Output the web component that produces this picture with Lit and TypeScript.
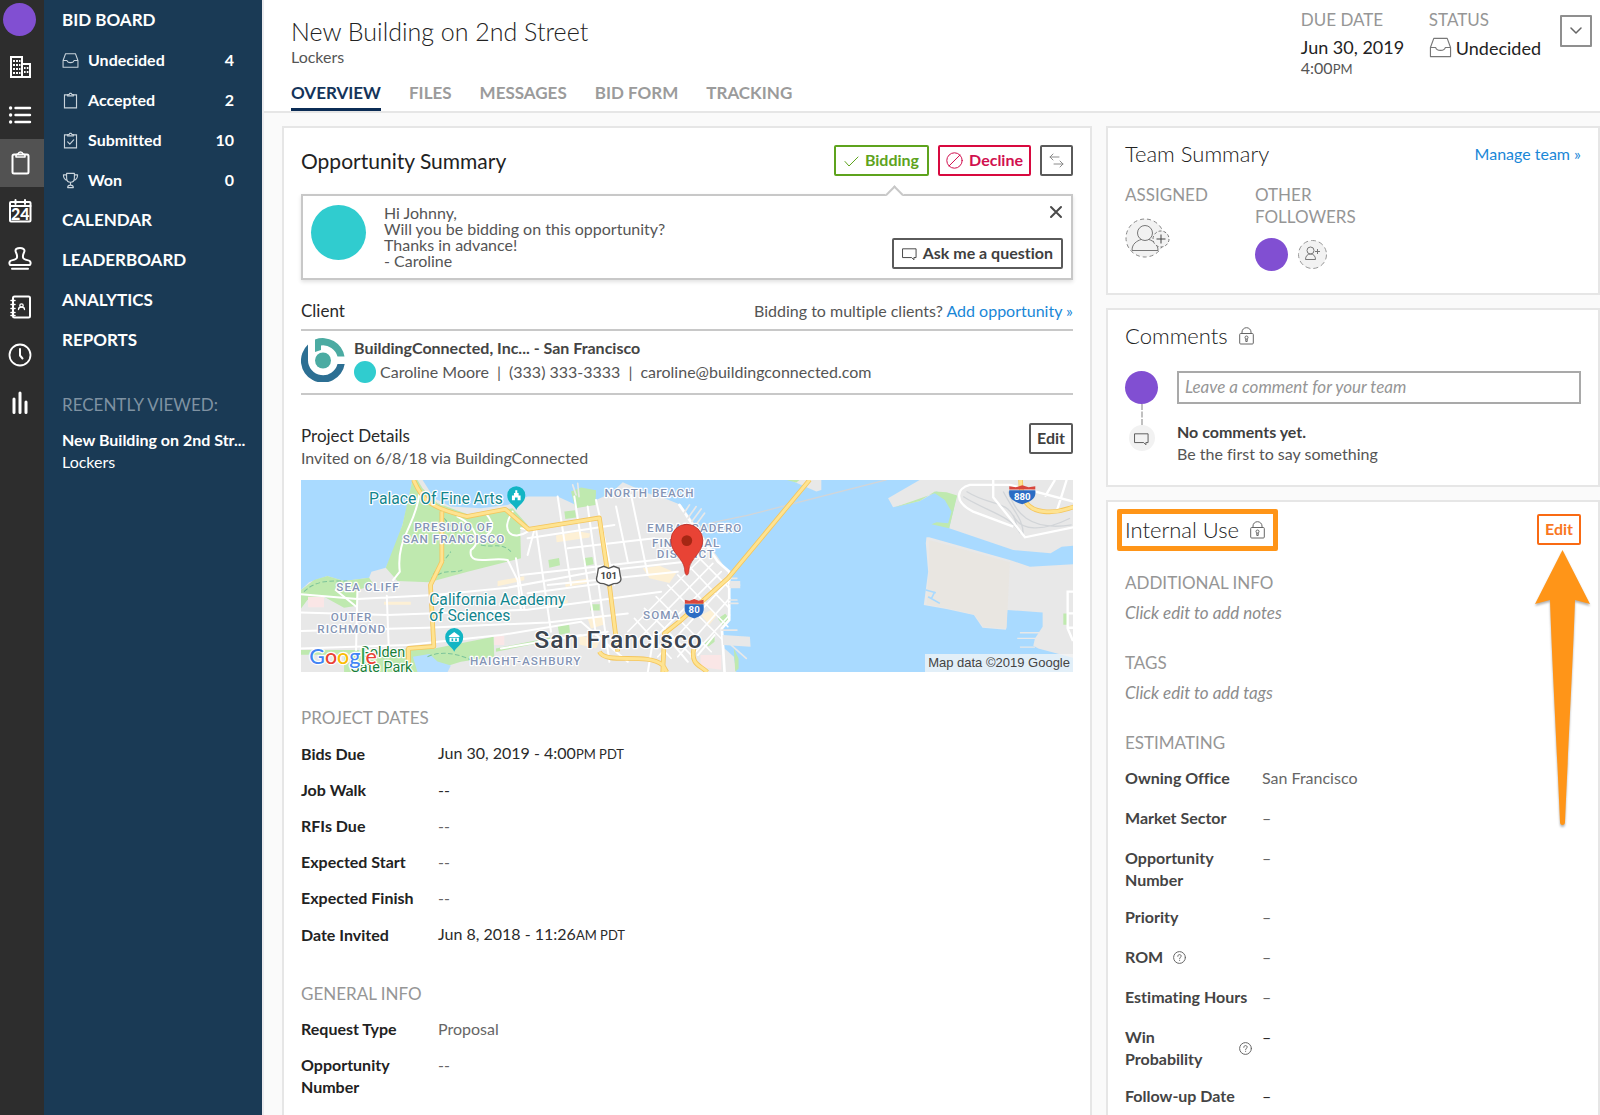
import { LitElement, html, css, svg, nothing } from "lit";
import { customElement } from "lit/decorators.js";

/* ---------- icons ---------- */

const icon = (size: number, body: unknown, box = 24) => html`
  <svg class="icon" width=${size} height=${size} viewBox="0 0 ${box} ${box}" fill="none"
    stroke="currentColor" stroke-linecap="round" stroke-linejoin="round" aria-hidden="true">${body}</svg>`;

const railIcons = {
  building: svg`<g stroke-width="2"><path d="M3 2h11v20H3zM14 9h8v13h-8" stroke-linejoin="miter"/></g>
    <g fill="currentColor" stroke="none"><path d="M5 5h2v2H5zM8 5h2v2H8zM11 5h1.500v2H11zM5 9h2v2H5zM8 9h2v2H8zM11 9h1.500v2H11zM5 13h2v2H5zM8 13h2v2H8zM11 13h1.500v2H11zM5 17h2v2H5zM8 17h2v2H8zM11 17h1.500v2H11zM16 12h1.600v2H16zM18.800 12h1.600v2h-1.600zM16 16h1.600v2H16zM18.800 16h1.600v2h-1.600z"/></g>`,
  list: svg`<g stroke-width="2.400"><path d="M7.500 5H22M7.500 12H22M7.500 19H22"/></g>
    <g fill="currentColor" stroke="none"><circle cx="2.600" cy="5" r="1.700"/><circle cx="2.600" cy="12" r="1.700"/><circle cx="2.600" cy="19" r="1.700"/></g>`,
  clipboard: svg`<g stroke-width="2"><rect x="4.500" y="3.500" width="16" height="19" rx="1.500"/>
    <path d="M8 6V4.500c0-1 1-1.300 2-1.500.500-1.500 1-2 2.500-2s2 .500 2.500 2c1 .200 2 .500 2 1.500V6z" stroke-width="1.600"/></g>`,
  calendar: svg`<rect x="2" y="3" width="20.500" height="19.500" rx="1" stroke-width="2"/><path d="M7.500 1v4M17 1v4" stroke-width="2"/>
    <path d="M2 7h20.500" stroke-width="2"/>
    <text x="12.300" y="21" text-anchor="middle" font-size="16" font-weight="900" fill="currentColor" stroke="none">24</text>`,
  stamp: svg`<g stroke-width="2"><path d="M12 1c-3 0-4.500 1.200-4.500 2.700 0 1.800 2.500 4.300 1.300 7.300C8.200 12.800 4 13 2.500 13.800 1 14.800 1.200 17 2 18h20c.800-1 1-3.200-.500-4.200-1.500-.800-5.700-1-6.300-2.800-1.200-3 1.300-5.500 1.300-7.300C16.500 2.200 15 1 12 1z"/><path d="M4 21.800h16"/></g>`,
  contacts: svg`<g stroke-width="2"><rect x="5" y="1.500" width="17" height="21" rx="1.500"/></g>
    <path d="M3 5.500h4M3 9.500h4M3 13.500h4M3 17.500h4M3 20.500h4" stroke-width="1.500"/>
    <circle cx="13.500" cy="10.500" r="1.700" stroke-width="1.300"/><path d="M10.500 14.500c0-2 1.500-2.500 3-2.500s3 .500 3 2.500" stroke-width="1.300"/>`,
  clock: svg`<circle cx="12" cy="12" r="10.500" stroke-width="1.800"/><path d="M12 6v6.500l2.500 3" stroke-width="2"/>`,
  bars: svg`<path d="M6 8v13.500M12 2v19.500M18 11v10.500" stroke-width="3"/>`,
};

const trayPath = svg`<path d="M1.500 12 5 2.500h14L22.500 12v9.500h-21zM1.500 12H7c.500 2.500 2.500 3 5 3s4.500-.500 5-3h5.500"/>`;
const bidIcons = {
  tray: svg`<g stroke-width="1.500">${trayPath}</g>`,
  clip: svg`<g stroke-width="1.600"><path d="M8 4H3.500v18.500h17V4H16" stroke-linejoin="miter"/><path d="M8 5.500V3.500h2L11 2h2l1 1.500h2v2z"/></g>`,
  clipCheck: svg`<g stroke-width="1.600"><path d="M8 4H3.500v18.500h17V4H16" stroke-linejoin="miter"/><path d="M8 5.500V3.500h2L11 2h2l1 1.500h2v2z"/><path d="m8 14 3 3 5.500-6"/></g>`,
  cup: svg`<g stroke-width="1.600"><path d="M6.500 2h11v6c0 4-2 6.500-5.500 6.500S6.500 12 6.500 8zM6.500 4H2c0 4 1.500 7 5.500 8M17.500 4H22c0 4-1.500 7-5.500 8M12 14.500v4M8 22c0-2.500 1.500-3.500 4-3.500s4 1 4 3.500z"/></g>`,
};

const lockIcon = html`<svg class="icon" width="15" height="18" viewBox="0 0 15 18" fill="none" stroke="currentColor" aria-hidden="true">
  <rect x="0.700" y="6.500" width="13.600" height="10.500" rx="1"/><path d="M3 6.500V5a4.500 4.300 0 0 1 9 0v1.500"/>
  <circle cx="7.500" cy="10.500" r="1.500"/><path d="M6.800 12v2.500h1.400V12"/></svg>`;
const bubble = svg`<path d="M1.500 4.500h21v14H19v3.500l-3.500-3.500h-14z" stroke-width="1.500" stroke-linejoin="miter"/>`;
const helpIcon = html`<svg class="icon" width="13" height="13" viewBox="0 0 13 13" fill="none" stroke="currentColor" stroke-linecap="round" aria-hidden="true">
  <circle cx="6.500" cy="6.500" r="5.900"/><path d="M4.800 5.300c0-1.100.700-1.700 1.700-1.700s1.700.600 1.700 1.500c0 1.200-1.600 1.200-1.600 2.400M6.600 9.200v.200"/></svg>`;

/* ---------- data ---------- */

type Row = { label: string; value: string; zone?: string; help?: boolean; strong?: boolean };

const board = [
  { label: "Undecided", count: 4, glyph: bidIcons.tray },
  { label: "Accepted", count: 2, glyph: bidIcons.clip },
  { label: "Submitted", count: 10, glyph: bidIcons.clipCheck },
  { label: "Won", count: 0, glyph: bidIcons.cup },
];
const rail = [
  { name: "Companies", glyph: railIcons.building },
  { name: "Lists", glyph: railIcons.list },
  { name: "Bid board", glyph: railIcons.clipboard, on: true },
  { name: "Calendar", glyph: railIcons.calendar },
  { name: "Approvals", glyph: railIcons.stamp },
  { name: "Contacts", glyph: railIcons.contacts },
  { name: "History", glyph: railIcons.clock },
  { name: "Statistics", glyph: railIcons.bars },
];
const dates: Row[] = [
  { label: "Bids Due", value: "Jun 30, 2019 - 4:00", zone: "PM PDT" },
  { label: "Job Walk", value: "--", strong: true },
  { label: "RFIs Due", value: "--" },
  { label: "Expected Start", value: "--" },
  { label: "Expected Finish", value: "--" },
  { label: "Date Invited", value: "Jun 8, 2018 - 11:26", zone: "AM PDT" },
];
const general: Row[] = [
  { label: "Request Type", value: "Proposal" },
  { label: "Opportunity Number", value: "--" },
];
const estimating: Row[] = [
  { label: "Owning Office", value: "San Francisco" },
  { label: "Market Sector", value: "–" },
  { label: "Opportunity Number", value: "–" },
  { label: "Priority", value: "–" },
  { label: "ROM", value: "–", help: true },
  { label: "Estimating Hours", value: "–" },
  { label: "Win Probability", value: "–", help: true, strong: true },
  { label: "Follow-up Date", value: "–", strong: true },
];

/* ---------- map ---------- */

@customElement("city-map")
class CityMap extends LitElement {
  static styles = css`
    :host { display: block; position: relative; height: 192px; overflow: hidden; background: #a9daff; }
    .canvas { display: block; width: 100%; height: 100%; }
    .credit {
      position: absolute; right: 0; bottom: 0; padding: 0 3px; background: rgba(245, 245, 245, 0.75);
      font: 13px/18px "Liberation Sans", sans-serif; color: #444;
    }
    .area { font: 500 35px Roboto, sans-serif; letter-spacing: 3px; fill: #8494b5; }
    .place { font: 400 47px Roboto, sans-serif; fill: #12858d; }
    .park { font: 400 43px Roboto, sans-serif; fill: #188038; }
    .city { font: 500 74px Roboto, sans-serif; letter-spacing: 3px; fill: #3c4550; }
    .halo { stroke: #fff; stroke-width: 7; paint-order: stroke; stroke-linejoin: round; }
    .shield { font: 700 29px Roboto, sans-serif; text-anchor: middle; }
    .brand { font: 500 64px Lato, sans-serif; }
  `;

  render() {
    return html`
      <svg class="canvas" viewBox="21 15 2313 576" preserveAspectRatio="xMidYMid slice" role="img" aria-label="Map of San Francisco">
        <path fill="#e8e8e8" d="M355 15 345 70 325 150 300 225 275 278 232 290 225 308 150 318 100 303 45 322 21 345V591H1325L1318 545 1290 520 1282 455 1305 430V330L1300 290 1255 225 1210 160 1160 90 1110 70 1060 55 985 22 950 55 905 75 845 90 790 65 700 65 640 90 560 100 470 95 420 70 385 15z"/>
        <g fill="#bfe9af">
          <path d="M355 15 325 150 275 278 310 318 405 322 520 290 680 250 678 165 700 150 655 100 600 108 520 118 430 85 385 40 370 15z"/>
          <path d="M21 345 60 315 100 303 150 318 225 308 240 330 190 345 188 392 150 398 90 365 40 375 21 400z"/>
          <path d="M342 520 420 520 598 485 600 545 500 560 400 591H150V530z"/>
          <path d="M21 525h180v14H21zM830 50l30-12 45 8-2 44-60 10z"/>
          <path d="M810 110l32-4 3 22-32 4zM762 255l32-6 3 22-32 7zM866 250l28-4 4 22-28 5zM790 452l34-6 3 26-32 8zM605 520l190-38v10L605 530zM888 388h28v18h-28z"/>
          <path d="M1270 430l22-14 12 14-20 20zM1230 505l30-25v20l-18 14zM1318 520l14 30v30l-10 10z"/>
        </g>
        <g fill="#fdf0d5">
          <path d="M785 182l70-12 32 6-2 12-98 14zM610 318l80-14v12l-80 18zM812 322l70-12v14l-68 12zM270 380h80v9h-80zM1045 280l50-8 50 22-20 30-60-14zM880 430l50-12v30l-40 12zM1220 420l30-15 18 15-24 30zM855 480l60 20-10 20-50-12zM760 385l60-10v10l-60 10z"/>
        </g>
        <path fill="#fae6e6" d="M42 365h48v32H42zM600 482h30v28h-30zM1218 540h62v44l-62-8z"/>
        <path fill="#b4deff" d="M356 545l50-8 24 22 40 12-10 20h-90z"/>
        <g fill="none" stroke="#7cc49a" stroke-width="3" stroke-dasharray="14 7">
          <path d="M410 320c10-40 40-60 60-90M430 300c30-20 60 0 80-20M30 350c40-40 90-30 130-32M450 130l50 60M560 210c40 10 60-10 90 20M400 545c40-20 100-10 150 20"/>
        </g>
        <g fill="none" stroke="#fff" stroke-linecap="round">
          <g stroke-width="6">
            <path d="M21 358 190 372 420 360 640 338 900 290 1160 262M21 412 280 420 700 404 940 372 1100 350M21 468 400 458 760 442 1000 415M21 520 340 510 620 480 860 440M190 345 186 525M278 362 284 520M680 160 720 165 700 240"/>
            <path d="M375 60c-10 90-70 130-58 230l-20 25M125 345l62 50M490 125c60 30 70 80 40 100-10 50 60 20 110 30l30 60 10 90M575 115c40 50 10 60-30 90M655 110c-40 60 0 90 45 60"/>
            <path d="M725 160 770 470M790 65 830 330M840 65 905 480M880 95 945 560M965 95 1000 260M905 75 960 330M1010 60 1060 300M665 250 690 400"/>
            <path d="M700 190 960 150M820 220 1080 190M680 300 1130 250M760 330 1150 290M700 355 960 320M730 500 940 470M620 520 860 480"/>
            <path d="M1080 470 1060 591M860 440 1000 560M1180 560 1130 500M1210 540 1260 480"/>
          </g>
          <g stroke-width="5">
            <path d="M1000 470 1230 240M1025 500 1255 265M1050 520 1280 290M1090 545 1300 320M1150 545 1305 370M1190 545 1305 420"/>
            <path d="M1120 330 1290 500M1150 300 1300 455M1180 270 1305 400M1210 245 1305 340M1085 365 1250 530M1050 400 1200 550M1020 430 1130 550"/>
          </g>
          <path stroke-width="8" d="M1155 90 1215 180 1270 260 1304 290V435L1282 460 1290 591"/>
          <path stroke-width="5" stroke="#e8e8e8" d="M835 30l10 30M850 25l4 40M1180 130l25-35M1192 140l28-38M1204 150l26-35M1165 120l20-30M1305 330h30M1305 310h22M1305 385h25M1305 375h22M1282 465h45M1310 510l45 40"/>
        </g>
        <path fill="#e8e8e8" d="M1305 318h32v22h-32zM1284 480l82 5 2 30-82-5z"/>

        <!-- eastern shore -->
        <g transform="translate(1155 0)">
          <path fill="#e8e8e8" d="M625 70 720 15H1179V212L1145 215 1112 235 1000 225 808 160 830 65 770 50 720 78 640 97zM740 187 748 187 990 255 1050 275 1179 268V548L1075 520 1060 512 1065 490 1088 455V412L982 405 978 464 908 458 882 420 800 402 732 390 745 290 738 205zM330 15h95v30l-15 5z"/>
          <path fill="#e9e6e1" d="M748 195 990 262 980 460 910 455 884 418 805 400 740 388 748 290z"/>
          <path fill="#bfe9af" d="M645 97 720 78 765 50 800 52 832 62 808 160 755 148 770 142 805 145 815 110 795 75 765 55zM1150 415h12v34h-12zM320 15h40l-10 8z"/>
          <g fill="none" stroke="#d2d5d8" stroke-width="4">
            <path d="M0 200c60-60 120-60 200-78L620 15M860 50c80 50 130 20 150 100M850 65c60 40 150 60 170 110M970 50c30 60 60 80 60 130M985 50c20 60 60 120 190 100M1000 120c20 50 90 50 170 10"/>
          </g>
          <g fill="none" stroke="#fff" stroke-width="7">
            <path d="M940 15v52l60 75 35 45 145-30M1000 155 880 110c-60-30-50-70-10-80h120l190 50M1130 110l30-95M1095 65l30-50M1179 350h-16v110l16 38M1163 415h16M1163 458h16"/>
          </g>
          <path fill="none" stroke="#a9daff" stroke-width="5" d="M738 345l30 8M745 365l35 20M765 350l-10 20"/>
          <path stroke="#e8e8e8" stroke-width="4" d="M1012 490h55M1020 516h45M1020 473h60"/>
        </g>

        <!-- motorways -->
        <g fill="none" stroke-linejoin="round">
          <g stroke="#f5c65c" stroke-width="14">
            <path d="M358 15c30 70 60 85 160 110l115-22 70 60 212-34 30 200 25 200M443 110v150l-34 70 10 184-76 6v50M915 530c20 40 140 0 190 40l12 21M1545 15 1300 310 1160 435 1110 475 1105 591M1198 520c-10 50 20 50 40 71"/>
            <path d="M2177 15c0 60 20 90 70 95s70-10 90-14"/>
          </g>
          <g stroke="#fee391" stroke-width="9">
            <path d="M358 15c30 70 60 85 160 110l115-22 70 60 212-34 30 200 25 200M443 110v150l-34 70 10 184-76 6v50M915 530c20 40 140 0 190 40l12 21M1545 15 1300 310 1160 435 1110 475 1105 591M1198 520c-10 50 20 50 40 71"/>
            <path d="M2177 15c0 60 20 90 70 95s70-10 90-14"/>
          </g>
        </g>

        <!-- route shields -->
        <path fill="#fff" stroke="#555" stroke-width="4" d="M912 280l16-6 15 6 15-6 16 6 4 24c6 16-6 22-20 22l-15 6-15-6c-14 0-26-6-20-22z"/>
        <text class="shield" x="943" y="313" fill="#444">101</text>
        <path fill="#2b6cc4" d="M1171 388h56c4 30-8 36-28 42-20-6-32-12-28-42z"/>
        <path fill="#d8463c" d="M1171 386v-12l14 3 14-5 14 5 14-3v12z"/>
        <text class="shield" x="1199" y="415" fill="#fff">80</text>
        <path fill="#2b6cc4" d="M2143 46h78c4 26-14 34-39 42-25-8-43-16-39-42z"/>
        <path fill="#d8463c" d="M2143 44v-10l20 3 19-6 19 6 20-3v10z"/>
        <text class="shield" x="2182" y="74" fill="#fff">880</text>

        <!-- labels -->
        <g class="halo">
          <g class="area">
            <text x="360" y="168">PRESIDIO OF</text>
            <text x="326" y="203">SAN FRANCISCO</text>
            <text x="930" y="66">NORTH BEACH</text>
            <text x="1058" y="171">EMBARCADERO</text>
            <text x="1073" y="216">FINANCIAL</text>
            <text x="1087" y="250">DISTRICT</text>
            <text x="127" y="347">SEA CLIFF</text>
            <text x="110" y="439">OUTER</text>
            <text x="70" y="473">RICHMOND</text>
            <text x="1046" y="431">SOMA</text>
            <text x="527" y="569">HAIGHT-ASHBURY</text>
          </g>
          <g class="place">
            <text x="225" y="88">Palace Of Fine Arts</text>
            <text x="405" y="391">California Academy</text>
            <text x="405" y="438">of Sciences</text>
          </g>
          <g class="park">
            <text x="198" y="546">Golden</text>
            <text x="168" y="592">Gate Park</text>
          </g>
          <text class="city" x="720" y="518">San Francisco</text>
        </g>

        <!-- place markers -->
        <g fill="#12b5c4">
          <path d="M666 105c-5-15-27-20-27-44a27 27 0 0 1 54 0c0 24-22 29-27 44z"/>
          <path d="M480 530c-5-15-27-20-27-44a27 27 0 0 1 54 0c0 24-22 29-27 44z"/>
        </g>
        <g fill="#fff">
          <path d="M653 76V62h6v-8h4v-8h6v8h4v8h6v14h-9v-8h-8v8z"/>
          <path d="M464 483l16-12 16 12v3h-32zM466 488h28v12h-28z"/>
        </g>
        <path fill="#12b5c4" d="M472 490h5v8h-5zM483 490h5v8h-5z"/>
        <path fill="#e84335" stroke="#b3261e" stroke-width="2" d="M1177 300c-5 0-6-8-7-20-4-30-41-46-41-84a48 48 0 0 1 96 0c0 38-37 54-41 84-1 12-2 20-7 20z"/>
        <circle cx="1177" cy="197" r="16" fill="#a52714"/>

        <text class="brand halo" x="46" y="568"><tspan fill="#4285f4">G</tspan><tspan fill="#ea4335">o</tspan><tspan fill="#fbbc05">o</tspan><tspan fill="#4285f4">g</tspan><tspan fill="#34a853">l</tspan><tspan fill="#ea4335">e</tspan></text>
      </svg>
      <span class="credit">Map data ©2019 Google</span>
    `;
  }
}

/* ---------- page ---------- */

@customElement("app-root")
class AppRoot extends LitElement {
  static styles = css`
    :host {
      display: flex; height: 100vh; overflow: hidden; background: #fafafa; color: #555;
      font: 400 16px/22px Lato, "Open Sans", sans-serif; font-variant-ligatures: none;
    }
    *, *::before { box-sizing: border-box; }
    a { color: inherit; text-decoration: none; }
    h1, h2, h3, p, dl, dd { margin: 0; }
    button { font: inherit; cursor: pointer; }
    .icon { display: block; flex: none; }
    .dot { flex: none; border-radius: 50%; background: #814fd2; }
    .dot-lg { width: 33px; height: 33px; }
    .teal { background: #30cccf; }
    .link { color: #1a87d7; }
    .small { font-size: 13px; }

    .rail { flex: none; width: 44px; background: #2d2d2d; color: #fff; }
    .rail-item { display: flex; align-items: center; height: 48px; padding-left: 8px; }
    .rail-item.on { background: #525252; }
    .rail-me { display: flex; height: 43px; padding: 3px; }

    .side { flex: none; width: 218px; padding: 0 28px 0 18px; background: #1a3a55; color: #fff; font-weight: 700; }
    .side-link { display: flex; align-items: center; height: 40px; gap: 9px; }
    .side-link .icon { color: #c9d3db; }
    .side-name { flex: 1; }
    .side-head { font-size: 17px; }
    .recent-head { margin: 34px 0 13px; font-size: 17px; font-weight: 400; color: #7f92a2; white-space: nowrap; }
    .recent { display: block; white-space: nowrap; }
    .recent-sub { display: block; font-weight: 400; }

    .page { flex: 1; min-width: 0; display: flex; flex-direction: column; border-left: 2px solid #ebebee; }
    .top { flex: none; display: flex; justify-content: space-between; padding: 0 8px 0 27px; background: #fff; border-bottom: 2px solid #e6e6e6; }
    .lead { padding-top: 15px; }
    .title { font-size: 25px; line-height: 32px; font-weight: 300; color: #222; }
    .sub { line-height: 20px; }
    .tabs { display: flex; gap: 28px; margin-top: 15px; }
    .tab { padding-bottom: 4px; border-bottom: 3px solid transparent; font-size: 17px; font-weight: 700; color: #9b9b9b; }
    .tab.on { color: #14345a; border-color: #0b2c55; }
    .facts { display: flex; gap: 19px; }
    .facts-cols { display: grid; grid-template-columns: 128px auto; padding-top: 9px; }
    .cap { font-size: 17px; font-weight: 400; line-height: 22px; color: #969696; }
    .fact { display: flex; align-items: center; gap: 4px; margin-top: 5px; font-size: 18px; color: #222; }
    .fact .icon { color: #777; }
    .fact-sub { line-height: 20px; }
    .more { display: grid; place-items: center; width: 32px; height: 32px; margin-top: 15px; padding: 0; border: 2px solid #8f8f8f; border-radius: 1px; background: #fff; color: #666; }

    .body { flex: 1; min-height: 0; overflow-y: auto; scrollbar-width: none; display: grid; grid-template-columns: minmax(0, 1fr) 494px; align-items: start; gap: 14px; padding: 13px 0 0 18px; }
    .cards { display: grid; gap: 13px; }
    .card { padding: 12px 17px 20px; border: 2px solid #e6e6e6; background: #fff; }
    .card-main { padding-top: 17px; }
    .row { display: flex; justify-content: space-between; align-items: center; }
    .h2 { font-size: 22px; line-height: 28px; font-weight: 300; color: #222; }
    .h2.dark { font-size: 21px; font-weight: 400; }
    .with-lock { display: flex; align-items: center; gap: 11px; }
    .with-lock .icon { color: #666; }

    .btn { display: inline-flex; align-items: center; justify-content: center; gap: 6px; height: 31px; padding: 0 8px 1px; border: 2px solid #5a5a5a; border-radius: 2px; background: #fff; color: #3f3f3f; font-weight: 700; white-space: nowrap; }
    .btn-row { display: flex; gap: 9px; }
    .btn-go { border-color: #5ea31d; color: #5ea31d; }
    .btn-no { border-color: #d8093f; color: #d1104f; padding: 0 6px 1px; }
    .btn-swap { width: 33px; padding: 0; color: #8a8a8a; }
    .btn-edit { padding: 0 6px 1px; }
    .btn-hot { border-color: #f96a13; color: #f9771f; }

    .note { position: relative; display: flex; gap: 18px; margin-top: 18px; padding: 9px 8px; border: 2px solid #c8c8c8; box-shadow: 0 2px 4px rgba(0, 0, 0, 0.12); }
    .note::before { content: ""; position: absolute; top: -8px; right: 170px; width: 13px; height: 13px; border: 2px solid #c8c8c8; border-right: 0; border-bottom: 0; background: #fff; transform: rotate(45deg); }
    .note-face { width: 55px; height: 55px; }
    .note-text { flex: 1; line-height: 16px; }
    .note-side { display: flex; flex-direction: column; justify-content: space-between; align-items: flex-end; }
    .close { display: flex; padding: 0; border: 0; background: none; color: #4a4a4a; }

    .client-head { margin-top: 20px; padding-bottom: 7px; border-bottom: 2px solid #c8c8c8; }
    .h3 { font-size: 17px; line-height: 22px; font-weight: 400; color: #2a2a2a; }
    .client { display: flex; align-items: center; gap: 9px; padding: 5px 0 9px; border-bottom: 2px solid #c8c8c8; line-height: 24px; }
    .client-name { font-weight: 700; color: #444; }
    .client-line { display: flex; align-items: center; gap: 4px; }
    .bar { padding: 0 4px; }
    .client-face { width: 22px; height: 22px; }

    .details-head { align-items: flex-start; margin-top: 28px; }
    .details-text { padding-top: 2px; }
    .map { margin-top: 11px; }
    .dates-cap { margin-top: 35px; }
    .general-cap { margin-top: 23px; }

    .facts-list { margin-top: 13px; color: #2a2a2a; }
    .line { display: flex; padding-bottom: 14px; }
    .label { flex: none; display: flex; align-items: center; gap: 10px; width: 127px; margin-right: 10px; font-weight: 700; color: #222; }
    .label .icon { color: #666; }
    .faint { color: #666; }
    .side-list .line { min-height: 40px; padding-bottom: 15px; align-items: flex-start; }
    .side-list .label { color: #444; }

    .team { display: grid; grid-template-columns: 130px 110px; margin-top: 16px; }
    .team-faces { display: flex; align-items: center; gap: 10px; margin-top: 10px; }
    .add { display: flex; padding: 0; border: 0; background: none; color: #777; }
    .team-card { padding-bottom: 22px; }

    .talk { display: flex; gap: 19px; margin-top: 21px; }
    .thread { display: flex; flex-direction: column; align-items: center; }
    .dash { height: 21px; border-left: 2px dashed #c0c0c0; }
    .thread-end { display: grid; place-items: center; width: 26px; height: 26px; border-radius: 50%; background: #f2f2f2; }
    .talk-body { flex: 1; }
    .talk-input { display: block; width: 100%; height: 33px; margin-bottom: 17px; padding: 0 6px 2px; border: 2px solid #a9a9a9; border-radius: 0; background: #fff; font: italic 400 17px/22px Lato, sans-serif; color: #444; }
    .talk-input::placeholder { color: #969696; opacity: 1; }
    .strong { font-weight: 700; color: #3f3f3f; }

    .marked { position: relative; }
    .marked::after { content: ""; position: absolute; inset: -7px -13px -7px -8px; border: 5px solid #ff9518; border-radius: 2px; }
    .hot { position: relative; display: flex; }
    .arrow { position: absolute; top: 36px; right: -9px; filter: drop-shadow(0 2px 1px rgba(0, 0, 0, 0.3)); pointer-events: none; }
    .info-cap { margin-top: 27px; }
    .next-cap { margin-top: 28px; }
    .hint { margin-top: 8px; font-size: 17px; font-style: italic; color: #8c8c8c; }
  `;

  private list(rows: Row[], extra = "") {
    return html`<dl class="facts-list ${extra}">
      ${rows.map((r) => html`<div class="line">
        <dt class="label"><span>${r.label}</span>${r.help ? helpIcon : nothing}</dt>
        <dd class=${r.strong || r.zone ? "" : "faint"}>${r.value}${r.zone ? html`<span class="small">${r.zone}</span>` : nothing}</dd>
      </div>`)}
    </dl>`;
  }

  render() {
    return html`
      <nav class="rail" aria-label="Sections">
        <a class="rail-me" href="#me" aria-label="Profile"><span class="dot dot-lg"></span></a>
        ${rail.map((r) => html`<a class="rail-item ${r.on ? "on" : ""}" href="#" aria-label=${r.name}>${icon(24, r.glyph)}</a>`)}
      </nav>

      <nav class="side" aria-label="Bid board">
        <a class="side-link side-head" href="#">BID BOARD</a>
        ${board.map((b) => html`<a class="side-link" href="#">${icon(17, b.glyph)}<span class="side-name">${b.label}</span><span>${b.count}</span></a>`)}
        ${["CALENDAR", "LEADERBOARD", "ANALYTICS", "REPORTS"].map((t) => html`<a class="side-link side-head" href="#">${t}</a>`)}
        <h2 class="recent-head">RECENTLY VIEWED:</h2>
        <a class="recent" href="#">New Building on 2nd Str...<span class="recent-sub">Lockers</span></a>
      </nav>

      <div class="page">
        <header class="top">
          <div class="lead">
            <h1 class="title">New Building on 2nd Street</h1>
            <p class="sub">Lockers</p>
            <nav class="tabs" aria-label="Opportunity">
              ${["OVERVIEW", "FILES", "MESSAGES", "BID FORM", "TRACKING"].map((t, i) => html`<a class="tab ${i ? "" : "on"}" href="#">${t}</a>`)}
            </nav>
          </div>
          <div class="facts">
            <div class="facts-cols">
              <div>
                <div class="cap">DUE DATE</div>
                <div class="fact">Jun 30, 2019</div>
                <div class="fact-sub">4:00<span class="small">PM</span></div>
              </div>
              <div>
                <div class="cap">STATUS</div>
                <div class="fact">${icon(23, svg`<g stroke-width="1.200">${trayPath}</g>`)}Undecided</div>
              </div>
            </div>
            <button class="more" aria-label="More">${icon(12, svg`<path d="m1 3 5 5 5-5" stroke-width="1.500"/>`, 12)}</button>
          </div>
        </header>

        <main class="body">
          <section class="card card-main">
            <div class="row">
              <h2 class="h2 dark">Opportunity Summary</h2>
              <div class="btn-row">
                <button class="btn btn-go">${icon(15, svg`<path d="m1 8.500 4 4.500L14 4"/>`, 15)}Bidding</button>
                <button class="btn btn-no">${icon(17, svg`<circle cx="8.500" cy="8.500" r="7.700"/><path d="m3 14 11-11"/>`, 17)}Decline</button>
                <button class="btn btn-swap" aria-label="Transfer">${icon(15, svg`<path d="M10 4H1M4 1 1 4l3 3M5 11h9M11 8l3 3-3 3"/>`, 15)}</button>
              </div>
            </div>

            <div class="note">
              <span class="dot teal note-face"></span>
              <p class="note-text">Hi Johnny,<br />Will you be bidding on this opportunity?<br />Thanks in advance!<br />- Caroline</p>
              <div class="note-side">
                <button class="close" aria-label="Close">${icon(14, svg`<path d="m2 2 10 10M12 2 2 12" stroke-width="2"/>`, 14)}</button>
                <button class="btn">${icon(15, bubble)}Ask me a question</button>
              </div>
            </div>

            <div class="row client-head">
              <h3 class="h3">Client</h3>
              <span>Bidding to multiple clients? <a class="link" href="#">Add opportunity »</a></span>
            </div>
            <div class="client">
              <svg class="icon" width="44" height="44" viewBox="0 0 44 44" fill="none" aria-hidden="true">
                <path d="M14 1.500A22 22 0 0 1 43.500 18.500H36.500A15 15 0 0 0 20 7.500v4.500l-6 2z" fill="#4baba2"/>
                <path d="M7 6.500V22a15 15 0 0 0 29.500 4H43.700A22 22 0 1 1 7 6.500z" fill="#2c6f93"/>
                <circle cx="22" cy="22.500" r="8" fill="#4baba2"/>
              </svg>
              <div>
                <div class="client-name">BuildingConnected, Inc... - San Francisco</div>
                <div class="client-line"><span class="dot teal client-face"></span><span>Caroline Moore</span><span class="bar">|</span><span>(333) 333-3333</span><span class="bar">|</span><span>caroline@buildingconnected.com</span></div>
              </div>
            </div>

            <div class="row details-head">
              <div class="details-text">
                <h3 class="h3">Project Details</h3>
                <p>Invited on 6/8/18 via BuildingConnected</p>
              </div>
              <button class="btn btn-edit">Edit</button>
            </div>
            <city-map class="map"></city-map>

            <h3 class="cap dates-cap">PROJECT DATES</h3>
            ${this.list(dates)}
            <h3 class="cap general-cap">GENERAL INFO</h3>
            ${this.list(general)}
          </section>

          <div class="cards">
            <section class="card team-card">
              <div class="row">
                <h2 class="h2">Team Summary</h2>
                <a class="link" href="#">Manage team »</a>
              </div>
              <div class="team">
                <div>
                  <div class="cap">ASSIGNED</div>
                  <div class="team-faces">
                    <button class="add" aria-label="Assign a person">
                      <svg class="icon" width="46" height="44" viewBox="0 0 46 44" fill="none" stroke="currentColor" aria-hidden="true">
                        <circle cx="20" cy="22" r="19" fill="#f2f2f2" stroke="#888" stroke-dasharray="4 3"/>
                        <circle cx="20" cy="17" r="7.500"/><path d="M7 34.500c0-7 5-9.500 9-11M33 34.500c0-7-5-9.500-9-11M7 34.500h26"/>
                        <circle cx="36" cy="23" r="8" fill="#f2f2f2" stroke-dasharray="3 2"/><path d="M36 18.500v9M31.500 23h9" stroke="#444"/>
                      </svg>
                    </button>
                  </div>
                </div>
                <div>
                  <div class="cap">OTHER FOLLOWERS</div>
                  <div class="team-faces">
                    <span class="dot dot-lg"></span>
                    <button class="add" aria-label="Add a follower">
                      <svg class="icon" width="29" height="29" viewBox="0 0 29 29" fill="none" stroke="currentColor" aria-hidden="true">
                        <circle cx="14.500" cy="14.500" r="14" fill="#f2f2f2" stroke="#999" stroke-dasharray="5 3"/>
                        <circle cx="12.500" cy="10.500" r="3.500"/><path d="M7.500 19.500c0-3.500 2-5.500 5-5.500s5 2 5 5.500zM19.500 9v5M17 11.500h5"/>
                      </svg>
                    </button>
                  </div>
                </div>
              </div>
            </section>

            <section class="card">
              <h2 class="h2 with-lock">Comments ${lockIcon}</h2>
              <div class="talk">
                <div class="thread">
                  <span class="dot dot-lg"></span><span class="dash"></span>
                  <span class="thread-end">${icon(15, bubble)}</span>
                </div>
                <div class="talk-body">
                  <input class="talk-input" type="text" placeholder="Leave a comment for your team" aria-label="Leave a comment for your team" />
                  <p class="strong">No comments yet.</p>
                  <p>Be the first to say something</p>
                </div>
              </div>
            </section>

            <section class="card">
              <div class="row">
                <h2 class="h2 with-lock marked">Internal Use ${lockIcon}</h2>
                <div class="hot">
                  <button class="btn btn-edit btn-hot">Edit</button>
                  <svg class="arrow" width="55" height="276" viewBox="0 0 55 276" aria-hidden="true">
                    <path fill="#ff9518" d="M27.500 0 55 54 40 50C38 110 34 180 30 272a2.500 3 0 0 1-5 0C21 180 17 110 15 50L0 54z"/>
                  </svg>
                </div>
              </div>
              <h3 class="cap info-cap">ADDITIONAL INFO</h3>
              <p class="hint">Click edit to add notes</p>
              <h3 class="cap next-cap">TAGS</h3>
              <p class="hint">Click edit to add tags</p>
              <h3 class="cap next-cap">ESTIMATING</h3>
              ${this.list(estimating, "side-list")}
            </section>
          </div>
        </main>
      </div>
    `;
  }
}
